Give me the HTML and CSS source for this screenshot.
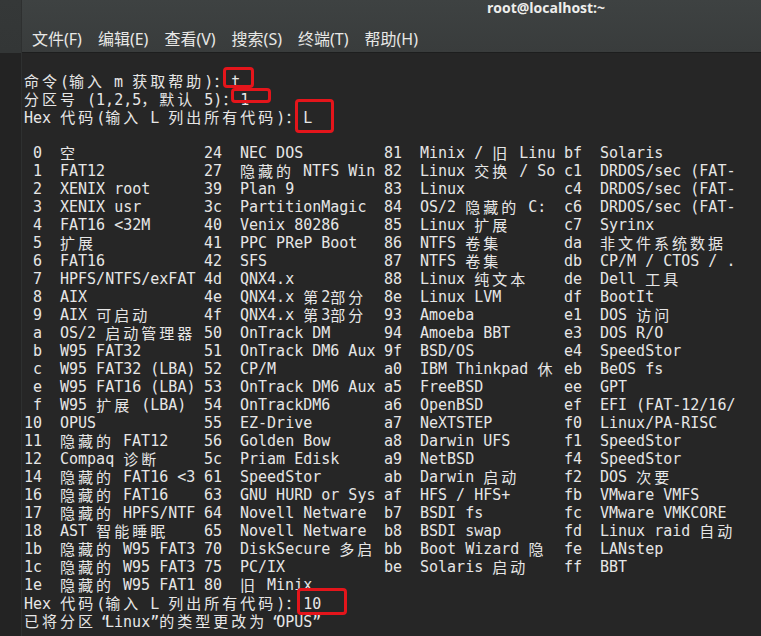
FILE: index.html
```html
<!DOCTYPE html>
<html lang="zh-CN">
<head>
    <meta charset="UTF-8">
    <title>root@localhost:~</title>
    <link rel="stylesheet" href="styles.css">
</head>
<body>
    <div class="app">
        <div class="edge"></div>
        <div class="window">
            <div class="header">
                <div class="title">root@localhost:~</div>
                <div class="menu">
                    <span>文件(F)</span>
                    <span>编辑(E)</span>
                    <span>查看(V)</span>
                    <span>搜索(S)</span>
                    <span>终端(T)</span>
                    <span>帮助(H)</span>
                </div>
            </div>

            <div class="term">
                <div class="line"><span class="w">命令</span>(<span class="w">输入</span> m <span class="w">获取帮助</span>)<span class="w">：</span>t</div>
                <div class="line"><span class="w">分区号</span> (1,2,5<span class="w">，默认</span> 5)<span class="w">：</span>1</div>
                <div class="line">Hex <span class="w">代码</span>(<span class="w">输入</span> L <span class="w">列出所有代码</span>)<span class="w">：</span>L</div>
                <div class="line"></div>

                <div class="types">
                    <div class="col">
                        <div class="t"><i>0</i><span class="w">空</span></div>
                        <div class="t"><i>1</i>FAT12</div>
                        <div class="t"><i>2</i>XENIX root</div>
                        <div class="t"><i>3</i>XENIX usr</div>
                        <div class="t"><i>4</i>FAT16 &lt;32M</div>
                        <div class="t"><i>5</i><span class="w">扩展</span></div>
                        <div class="t"><i>6</i>FAT16</div>
                        <div class="t"><i>7</i>HPFS/NTFS/exFAT</div>
                        <div class="t"><i>8</i>AIX</div>
                        <div class="t"><i>9</i>AIX <span class="w">可启动</span></div>
                        <div class="t"><i>a</i>OS/2 <span class="w">启动管理器</span></div>
                        <div class="t"><i>b</i>W95 FAT32</div>
                        <div class="t"><i>c</i>W95 FAT32 (LBA)</div>
                        <div class="t"><i>e</i>W95 FAT16 (LBA)</div>
                        <div class="t"><i>f</i>W95 <span class="w">扩展</span> (LBA)</div>
                        <div class="t"><i>10</i>OPUS</div>
                        <div class="t"><i>11</i><span class="w">隐藏的</span> FAT12</div>
                        <div class="t"><i>12</i>Compaq <span class="w">诊断</span></div>
                        <div class="t"><i>14</i><span class="w">隐藏的</span> FAT16 &lt;3</div>
                        <div class="t"><i>16</i><span class="w">隐藏的</span> FAT16</div>
                        <div class="t"><i>17</i><span class="w">隐藏的</span> HPFS/NTF</div>
                        <div class="t"><i>18</i>AST <span class="w">智能睡眠</span></div>
                        <div class="t"><i>1b</i><span class="w">隐藏的</span> W95 FAT3</div>
                        <div class="t"><i>1c</i><span class="w">隐藏的</span> W95 FAT3</div>
                        <div class="t"><i>1e</i><span class="w">隐藏的</span> W95 FAT1</div>
                    </div>
                    <div class="col">
                        <div class="t"><i>24</i>NEC DOS</div>
                        <div class="t"><i>27</i><span class="w">隐藏的</span> NTFS Win</div>
                        <div class="t"><i>39</i>Plan 9</div>
                        <div class="t"><i>3c</i>PartitionMagic</div>
                        <div class="t"><i>40</i>Venix 80286</div>
                        <div class="t"><i>41</i>PPC PReP Boot</div>
                        <div class="t"><i>42</i>SFS</div>
                        <div class="t"><i>4d</i>QNX4.x</div>
                        <div class="t"><i>4e</i>QNX4.x <span class="w">第</span>2<span class="w">部分</span></div>
                        <div class="t"><i>4f</i>QNX4.x <span class="w">第</span>3<span class="w">部分</span></div>
                        <div class="t"><i>50</i>OnTrack DM</div>
                        <div class="t"><i>51</i>OnTrack DM6 Aux</div>
                        <div class="t"><i>52</i>CP/M</div>
                        <div class="t"><i>53</i>OnTrack DM6 Aux</div>
                        <div class="t"><i>54</i>OnTrackDM6</div>
                        <div class="t"><i>55</i>EZ-Drive</div>
                        <div class="t"><i>56</i>Golden Bow</div>
                        <div class="t"><i>5c</i>Priam Edisk</div>
                        <div class="t"><i>61</i>SpeedStor</div>
                        <div class="t"><i>63</i>GNU HURD or Sys</div>
                        <div class="t"><i>64</i>Novell Netware</div>
                        <div class="t"><i>65</i>Novell Netware</div>
                        <div class="t"><i>70</i>DiskSecure <span class="w">多启</span></div>
                        <div class="t"><i>75</i>PC/IX</div>
                        <div class="t"><i>80</i><span class="w">旧</span> Minix</div>
                    </div>
                    <div class="col">
                        <div class="t"><i>81</i>Minix / <span class="w">旧</span> Linu</div>
                        <div class="t"><i>82</i>Linux <span class="w">交换</span> / So</div>
                        <div class="t"><i>83</i>Linux</div>
                        <div class="t"><i>84</i>OS/2 <span class="w">隐藏的</span> C:</div>
                        <div class="t"><i>85</i>Linux <span class="w">扩展</span></div>
                        <div class="t"><i>86</i>NTFS <span class="w">卷集</span></div>
                        <div class="t"><i>87</i>NTFS <span class="w">卷集</span></div>
                        <div class="t"><i>88</i>Linux <span class="w">纯文本</span></div>
                        <div class="t"><i>8e</i>Linux LVM</div>
                        <div class="t"><i>93</i>Amoeba</div>
                        <div class="t"><i>94</i>Amoeba BBT</div>
                        <div class="t"><i>9f</i>BSD/OS</div>
                        <div class="t"><i>a0</i>IBM Thinkpad <span class="w">休</span></div>
                        <div class="t"><i>a5</i>FreeBSD</div>
                        <div class="t"><i>a6</i>OpenBSD</div>
                        <div class="t"><i>a7</i>NeXTSTEP</div>
                        <div class="t"><i>a8</i>Darwin UFS</div>
                        <div class="t"><i>a9</i>NetBSD</div>
                        <div class="t"><i>ab</i>Darwin <span class="w">启动</span></div>
                        <div class="t"><i>af</i>HFS / HFS+</div>
                        <div class="t"><i>b7</i>BSDI fs</div>
                        <div class="t"><i>b8</i>BSDI swap</div>
                        <div class="t"><i>bb</i>Boot Wizard <span class="w">隐</span></div>
                        <div class="t"><i>be</i>Solaris <span class="w">启动</span></div>
                    </div>
                    <div class="col">
                        <div class="t"><i>bf</i>Solaris</div>
                        <div class="t"><i>c1</i>DRDOS/sec (FAT-</div>
                        <div class="t"><i>c4</i>DRDOS/sec (FAT-</div>
                        <div class="t"><i>c6</i>DRDOS/sec (FAT-</div>
                        <div class="t"><i>c7</i>Syrinx</div>
                        <div class="t"><i>da</i><span class="w">非文件系统数据</span></div>
                        <div class="t"><i>db</i>CP/M / CTOS / .</div>
                        <div class="t"><i>de</i>Dell <span class="w">工具</span></div>
                        <div class="t"><i>df</i>BootIt</div>
                        <div class="t"><i>e1</i>DOS <span class="w">访问</span></div>
                        <div class="t"><i>e3</i>DOS R/O</div>
                        <div class="t"><i>e4</i>SpeedStor</div>
                        <div class="t"><i>eb</i>BeOS fs</div>
                        <div class="t"><i>ee</i>GPT</div>
                        <div class="t"><i>ef</i>EFI (FAT-12/16/</div>
                        <div class="t"><i>f0</i>Linux/PA-RISC</div>
                        <div class="t"><i>f1</i>SpeedStor</div>
                        <div class="t"><i>f4</i>SpeedStor</div>
                        <div class="t"><i>f2</i>DOS <span class="w">次要</span></div>
                        <div class="t"><i>fb</i>VMware VMFS</div>
                        <div class="t"><i>fc</i>VMware VMKCORE</div>
                        <div class="t"><i>fd</i>Linux raid <span class="w">自动</span></div>
                        <div class="t"><i>fe</i>LANstep</div>
                        <div class="t"><i>ff</i>BBT</div>
                    </div>
                </div>

                <div class="line">Hex <span class="w">代码</span>(<span class="w">输入</span> L <span class="w">列出所有代码</span>)<span class="w">：</span>10</div>
                <div class="line"><span class="w">已将分区</span><span class="lq">“</span>Linux”<span class="w">的类型更改为</span><span class="lq">“</span>OPUS”</div>
            </div>
        </div>
    </div>

    <!-- 标注框 -->
    <div class="mark mark-1"></div>
    <div class="mark mark-2"></div>
    <div class="mark mark-3"></div>
    <div class="mark mark-4"></div>
</body>
</html>
```

FILE: styles.css
```css
* {
    margin: 0;
    padding: 0;
    box-sizing: border-box;
}

body {
    width: 761px;
    height: 636px;
    overflow: hidden;
    background: #242424;
    position: relative;
}

.app {
    display: flex;
    height: 100%;
}

.edge {
    width: 22px;
    flex-shrink: 0;
    background: linear-gradient(#353838 0, #333636 53px, #232323 53px);
    border-right: 1px solid #2e3030;
}

.window {
    flex: 1;
    display: flex;
    flex-direction: column;
}

.header {
    height: 53px;
    background: linear-gradient(#3e4242, #393c3c);
    border-bottom: 1px solid #1d1e1e;
}

.title {
    height: 24px;
    padding: 1px 0 0 465px;
    font-family: "Open Sans", "Noto Sans", sans-serif;
    font-weight: bold;
    font-size: 14px;
    line-height: 14px;
    color: #eeeeec;
}

.menu {
    display: flex;
    gap: 16px;
    padding-left: 10px;
    height: 28px;
    align-items: center;
    font-family: "Noto Sans", "Noto Sans CJK SC", sans-serif;
    font-size: 16px;
    color: #e8e8e6;
}

.term {
    flex: 1;
    background: #262626;
    padding: 19px 0 0 2px;
    font-family: "DejaVu Sans Mono", "Noto Sans CJK SC", monospace;
    font-size: 15px;
    line-height: 18px;
    color: #e6e6e6;
}

.line {
    height: 18px;
    white-space: pre;
}

.w {
    font-family: "Noto Sans CJK SC", sans-serif;
    letter-spacing: 3px;
}

/* 终端里左引号占一格，字形偏右 */
.lq {
    display: inline-block;
    width: 9px;
    padding-left: 5px;
}

.types {
    display: flex;
}

.col {
    width: 180px;
}

.t {
    display: flex;
    height: 18px;
    white-space: pre;
}

.t i {
    font-style: normal;
    width: 18px;
    margin-right: 18px;
    text-align: right;
}

.mark {
    position: absolute;
    border: 3px solid #e4151b;
    border-radius: 4px;
}

.mark-1 {
    left: 223px;
    top: 67px;
    width: 31px;
    height: 21px;
}

.mark-2 {
    left: 231px;
    top: 88px;
    width: 40px;
    height: 15px;
}

.mark-3 {
    left: 295px;
    top: 99px;
    width: 39px;
    height: 34px;
}

.mark-4 {
    left: 297px;
    top: 588px;
    width: 50px;
    height: 27px;
}
```
